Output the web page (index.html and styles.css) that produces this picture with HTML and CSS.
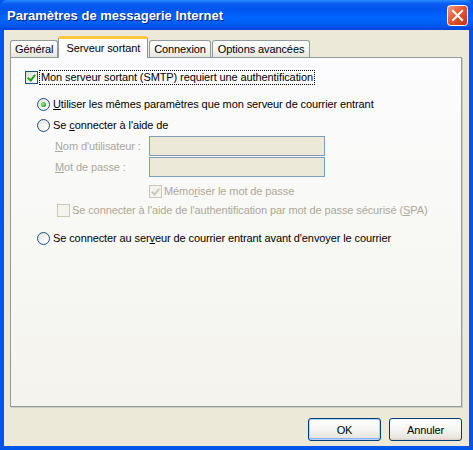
FILE: index.html
```html
<!DOCTYPE html>
<html lang="fr">
<head>
<meta charset="utf-8">
<title>Paramètres de messagerie Internet</title>
<link rel="stylesheet" href="styles.css">
</head>
<body>
<div class="window">
  <div class="titlebar">
    <span class="title">Paramètres de messagerie Internet</span>
    <span class="close">
      <svg width="21" height="21" viewBox="0 0 21 21">
        <defs>
          <linearGradient id="cg" x1="0" y1="0" x2="1" y2="1">
            <stop offset="0" stop-color="#f3a38a"/>
            <stop offset="0.45" stop-color="#e4572f"/>
            <stop offset="1" stop-color="#c5320f"/>
          </linearGradient>
        </defs>
        <rect x="0.5" y="0.5" width="20" height="20" rx="3" fill="url(#cg)" stroke="#fff"/>
        <path d="M6 6 L15 15 M15 6 L6 15" stroke="#fff" stroke-width="2" stroke-linecap="square"/>
      </svg>
    </span>
  </div>
  <div class="client">
    <div class="tabs">
      <div class="tab">Général</div>
      <div class="tab active">Serveur sortant</div>
      <div class="tab">Connexion</div>
      <div class="tab">Options avancées</div>
    </div>
    <div class="panel">
      <div class="row main-check">
        <span class="cb checked"></span>
        <span class="focus">Mon serveur sortant (SMTP) requiert une authentification</span>
      </div>
      <div class="row radio-row r1">
        <span class="radio on"></span>
        <span><u>U</u>tiliser les mêmes paramètres que mon serveur de courrier entrant</span>
      </div>
      <div class="row radio-row r2">
        <span class="radio"></span>
        <span>Se <u>c</u>onnecter à l'aide de</span>
      </div>
      <div class="field">
        <span class="flabel disabled"><u>N</u>om d'utilisateur :</span>
        <span class="input"></span>
      </div>
      <div class="field f2">
        <span class="flabel disabled"><u>M</u>ot de passe :</span>
        <span class="input"></span>
      </div>
      <div class="row remember">
        <span class="cb dis checked"></span>
        <span class="disabled">Mémo<u>r</u>iser le mot de passe</span>
      </div>
      <div class="row spa">
        <span class="cb dis"></span>
        <span class="disabled">Se connecter à l'aide de l'authentification par mot de passe sécurisé (<u>S</u>PA)</span>
      </div>
      <div class="row radio-row r3">
        <span class="radio"></span>
        <span>Se connecter au ser<u>v</u>eur de courrier entrant avant d'envoyer le courrier</span>
      </div>
    </div>
    <div class="buttons">
      <span class="btn default">OK</span>
      <span class="btn">Annuler</span>
    </div>
  </div>
</div>
</body>
</html>
```
FILE: styles.css
```css
html, body {
  margin: 0;
  padding: 0;
  background: #0a246a;
}
.window {
  width: 473px;
  height: 450px;
  box-sizing: border-box;
  display: flex;
  flex-direction: column;
  background: #0055ea;
  font-family: Tahoma, "Liberation Sans", Arial, sans-serif;
  font-size: 11px;
  letter-spacing: -0.1px;
  color: #000;
}
.titlebar {
  height: 30px;
  flex: none;
  display: flex;
  align-items: center;
  justify-content: space-between;
  padding: 0 5px 0 7px;
  border-radius: 7px 7px 0 0;
  background: linear-gradient(to bottom, #2a8cff 0%, #0a5ef2 12%, #0055ee 30%, #0066ff 60%, #0058f0 85%, #0042d8 100%);
}
.title {
  color: #fff;
  font-family: "Liberation Sans", Arial, sans-serif;
  font-weight: bold;
  font-size: 13px;
  letter-spacing: 0;
  text-shadow: 1px 1px 0 #0a1e7a;
  margin-top: 1px;
}
.close {
  display: flex;
  margin-top: 1px;
}
.client {
  flex: 1;
  margin: 0 4px 4px 4px;
  background: #ece9d8;
  display: flex;
  flex-direction: column;
  padding: 6px 6px 0 6px;
}
.tabs {
  display: flex;
  align-items: flex-end;
  height: 21px;
  position: relative;
  z-index: 1;
}
.tab {
  height: 17px;
  line-height: 16px;
  padding: 0 4px;
  margin-right: 1px;
  border: 1px solid #919b9c;
  border-bottom: none;
  border-radius: 3px 3px 0 0;
  background: linear-gradient(to bottom, #ffffff, #f3f3ef 60%, #e6e6df);
  box-sizing: border-box;
}
.tab:last-child { padding: 0 5px; }
.tab.active {
  height: 22px;
  line-height: 18px;
  padding: 0 7px;
  margin: 0 1px -1px -1px;
  border-top: 3px solid #ffc83c;
  background: #fcfcfe;
}
.panel {
  height: 350px;
  box-sizing: border-box;
  border: 1px solid #919b9c;
  box-shadow: 1px 1px 0 #d0cebf;
  background: linear-gradient(to bottom, #fcfcfe 0%, #f7f7f3 60%, #f4f3ee 100%);
  padding: 12px 0 0 14px;
  display: flex;
  flex-direction: column;
  margin-right: 1px;
}
.row {
  display: flex;
  align-items: center;
  height: 14px;
}
.main-check .focus {
  outline: 1px dotted #000;
  outline-offset: 0;
  padding: 0 1px 1px 1px;
}
.cb {
  width: 13px;
  height: 13px;
  box-sizing: border-box;
  border: 1px solid #1c5180;
  background: linear-gradient(135deg, #dcdcd7, #ffffff);
  margin-right: 2px;
  position: relative;
  flex: none;
}
.cb.checked::after {
  content: "";
  position: absolute;
  left: 3px;
  top: 1px;
  width: 3px;
  height: 6px;
  border: solid #21a121;
  border-width: 0 2px 2px 0;
  transform: rotate(40deg);
}
.cb.dis {
  border-color: #cac8bb;
  background: #f4f3ee;
}
.cb.dis.checked::after {
  border-color: #cac8bb;
}
.radio {
  width: 13px;
  height: 13px;
  box-sizing: border-box;
  border: 1px solid #1c5180;
  border-radius: 50%;
  background: radial-gradient(circle at 70% 70%, #ffffff 0%, #f0f0ea 50%, #dcdcd5 100%);
  margin-right: 3px;
  position: relative;
  flex: none;
}
.radio.on::after {
  content: "";
  position: absolute;
  left: 3px;
  top: 3px;
  width: 5px;
  height: 5px;
  border-radius: 50%;
  background: radial-gradient(circle at 40% 40%, #a0f0a0, #21a121 70%);
}
.r1 { margin-top: 13px; margin-left: 12px; }
.r2 { margin-top: 7px; margin-left: 12px; }
.field {
  display: flex;
  align-items: center;
  margin-top: 4px;
  margin-left: 30px;
  height: 20px;
}
.f2 { margin-top: 1px; }
.flabel {
  width: 94px;
  flex: none;
}
.input {
  width: 176px;
  height: 20px;
  box-sizing: border-box;
  border: 1px solid #7f9db9;
  background: #ece9d8;
}
.disabled { color: #aca899; }
.remember { margin-top: 7px; margin-left: 124px; }
.spa { margin-top: 5px; margin-left: 32px; }
.r3 { margin-top: 14px; margin-left: 12px; }
.buttons {
  display: flex;
  justify-content: flex-end;
  gap: 8px;
  margin-top: 11px;
  padding-right: 1px;
}
.btn {
  width: 73px;
  height: 23px;
  box-sizing: border-box;
  border: 1px solid #003c74;
  border-radius: 3px;
  display: flex;
  align-items: center;
  justify-content: center;
  background: linear-gradient(to bottom, #ffffff 0%, #f5f5f2 50%, #e6e5de 90%, #d6d0c5 100%);
}
.btn.default {
  box-shadow: inset 0 0 0 1px #b9d1fa, inset 0 -1px 0 1px #8cb4f2;
}
u { text-decoration: underline; }
```
